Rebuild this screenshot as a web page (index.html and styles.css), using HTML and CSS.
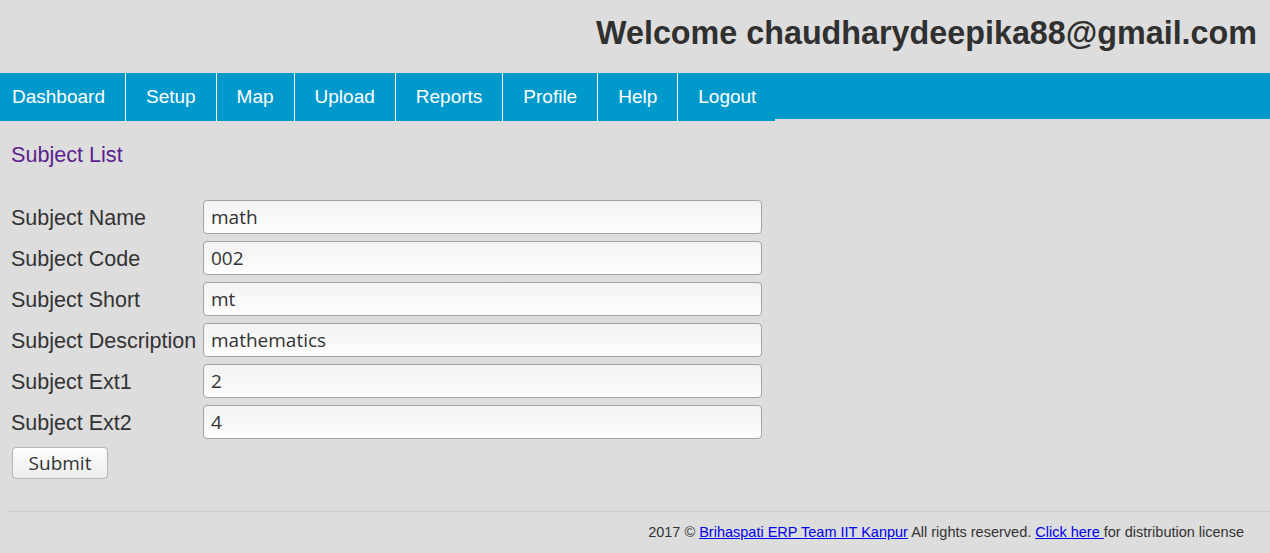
FILE: index.html
```html
<!DOCTYPE html>
<html>
<head>
<meta charset="utf-8">
<title>Subject List</title>
<link rel="stylesheet" href="styles.css">
</head>
<body>
<header class="top">
  <h1 class="welcome">Welcome chaudharydeepika88@gmail.com</h1>
</header>
<nav class="menu">
  <a class="menu-item first" href="#">Dashboard</a>
  <a class="menu-item" href="#">Setup</a>
  <a class="menu-item" href="#">Map</a>
  <a class="menu-item" href="#">Upload</a>
  <a class="menu-item" href="#">Reports</a>
  <a class="menu-item" href="#">Profile</a>
  <a class="menu-item" href="#">Help</a>
  <a class="menu-item" href="#">Logout</a>
</nav>
<main class="content">
  <h2 class="page-title">Subject List</h2>
  <form class="subject-form">
    <label class="field-label">Subject Name</label>
    <input class="field-input" type="text" value="math">
    <label class="field-label">Subject Code</label>
    <input class="field-input" type="text" value="002">
    <label class="field-label">Subject Short</label>
    <input class="field-input" type="text" value="mt">
    <label class="field-label">Subject Description</label>
    <input class="field-input" type="text" value="mathematics">
    <label class="field-label">Subject Ext1</label>
    <input class="field-input" type="text" value="2">
    <label class="field-label">Subject Ext2</label>
    <input class="field-input" type="text" value="4">
  </form>
  <button class="submit-btn" type="button">Submit</button>
</main>
<footer class="footer">
  2017 © <a href="#">Brihaspati ERP Team IIT Kanpur</a> All rights reserved. <a href="#">Click here </a>for distribution license
</footer>
</body>
</html>
```

FILE: styles.css
```css
html, body {
  margin: 0;
  padding: 0;
  background: #dddddd;
  font-family: "Liberation Sans", Arial, sans-serif;
  color: #333333;
}

.top {
  height: 73px;
  display: flex;
  justify-content: flex-end;
}

.welcome {
  margin: 0;
  padding-right: 13px;
  font-size: 32.3px;
  font-weight: bold;
  line-height: 66px;
  color: #303030;
}

.menu {
  display: flex;
  align-items: flex-start;
  height: 46px;
  background: #0099cc;
}

.menu-item {
  display: block;
  height: 48px;
  line-height: 48px;
  padding: 0 20px;
  font-size: 19px;
  color: #ffffff;
  text-decoration: none;
  background: #0099cc;
  border-right: 1px solid #ffffff;
}

.menu-item.first {
  padding-left: 12px;
}

.menu-item:last-child {
  border-right: none;
  padding-right: 19px;
}

.content {
  padding-left: 11px;
}

.page-title {
  margin: 22px 0 0 0;
  font-size: 21.6px;
  font-weight: normal;
  line-height: 27px;
  color: #5b1f8e;
}

.subject-form {
  margin-top: 32px;
  display: grid;
  grid-template-columns: 192px 559px;
  row-gap: 7px;
  align-items: center;
}

.field-label {
  padding-top: 2px;
  font-size: 21.5px;
  color: #333333;
}

.field-input {
  box-sizing: border-box;
  width: 559px;
  height: 34px;
  margin: 0;
  padding: 0 7px;
  border: 1px solid #a3a3a3;
  border-radius: 4px;
  background: linear-gradient(to bottom, #f3f3f3, #fdfdfd);
  font-family: "Open Sans", "DejaVu Sans", sans-serif;
  font-size: 19px;
  color: #333333;
}

.submit-btn {
  display: block;
  box-sizing: border-box;
  margin: 8px 0 0 1px;
  width: 96px;
  height: 32px;
  padding: 0;
  border: 1px solid #b5b5b5;
  border-radius: 4px;
  background: linear-gradient(to bottom, #fdfdfd, #ececec);
  font-family: "Open Sans", "DejaVu Sans", sans-serif;
  font-size: 19px;
  color: #333333;
}

.footer {
  margin: 32px 0 0 8px;
  border-top: 1px solid #cccccc;
  padding: 10px 26px 0 0;
  height: 31px;
  text-align: right;
  font-size: 14.5px;
  line-height: 21px;
  color: #333333;
}

.footer a {
  color: #0000ee;
}
```
